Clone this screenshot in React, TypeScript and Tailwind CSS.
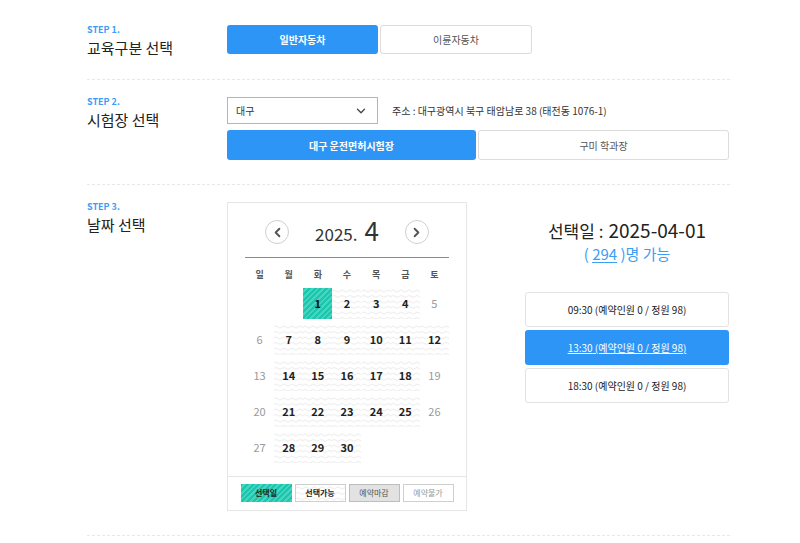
import React from "react";
import { ChevronDown, ChevronLeft, ChevronRight } from "lucide-react";

type Day = { d?: number; kind?: "sel" | "ok" | "off" };

const rows: Day[][] = [
	[{}, {}, { d: 1, kind: "sel" }, { d: 2, kind: "ok" }, { d: 3, kind: "ok" }, { d: 4, kind: "ok" }, { d: 5, kind: "off" }],
	[{ d: 6, kind: "off" }, { d: 7, kind: "ok" }, { d: 8, kind: "ok" }, { d: 9, kind: "ok" }, { d: 10, kind: "ok" }, { d: 11, kind: "ok" }, { d: 12, kind: "ok" }],
	[{ d: 13, kind: "off" }, { d: 14, kind: "ok" }, { d: 15, kind: "ok" }, { d: 16, kind: "ok" }, { d: 17, kind: "ok" }, { d: 18, kind: "ok" }, { d: 19, kind: "off" }],
	[{ d: 20, kind: "off" }, { d: 21, kind: "ok" }, { d: 22, kind: "ok" }, { d: 23, kind: "ok" }, { d: 24, kind: "ok" }, { d: 25, kind: "ok" }, { d: 26, kind: "off" }],
	[{ d: 27, kind: "off" }, { d: 28, kind: "ok" }, { d: 29, kind: "ok" }, { d: 30, kind: "ok" }, {}, {}, {}],
];

const weekdays = ["일", "월", "화", "수", "목", "금", "토"];

const stripes =
	"bg-[repeating-linear-gradient(135deg,#1cc6ad_0px,#1cc6ad_2px,#45d6c2_2px,#45d6c2_4px)]";

function Wave() {
	return (
		<svg className="absolute inset-0 w-full h-full" aria-hidden>
			<rect width="100%" height="100%" fill="url(#wave)" />
		</svg>
	);
}

function StepLabel({ step, title }: { step: string; title: string }) {
	return (
		<div className="w-[140px] h-[29px] shrink-0">
			<div className="text-[9px] font-bold text-[#3d9cf5] leading-[10px]">{step}</div>
			<div className="text-[15px] text-[#222] leading-[20px] mt-[3px]">{title}</div>
		</div>
	);
}

function Calendar() {
	return (
		<div className="w-[240px] border border-[#e6e6e6] bg-white">
			<div className="px-[17px] pt-[17px] pb-[13px]">
				<div className="flex items-center justify-center gap-[26px] h-[24px]">
					<button className="size-[24px] rounded-full border border-[#cfcfcf] flex items-center justify-center text-[#555]">
						<ChevronLeft size={15} strokeWidth={3} />
					</button>
					<div className="flex items-baseline gap-[7px] text-[#333]">
						<span className="text-[17px]">2025.</span>
						<span className="text-[26px] leading-[26px]">4</span>
					</div>
					<button className="size-[24px] rounded-full border border-[#cfcfcf] flex items-center justify-center text-[#555]">
						<ChevronRight size={15} strokeWidth={3} />
					</button>
				</div>
				<div className="mt-[13px] h-[1px] bg-[#8a8a8a]" />
				<div className="grid grid-cols-7 h-[30px] pt-[3px] items-center">
					{weekdays.map((w) => (
						<div key={w} className="text-center text-[9px] font-bold text-[#555]">
							{w}
						</div>
					))}
				</div>
				<div className="flex flex-col gap-[5px]">
					{rows.map((r, i) => (
						<div key={i} className="grid grid-cols-7 h-[31px]">
							{r.map((c, j) => {
								if (!c.d) return <div key={j} />;
								if (c.kind === "sel")
									return (
										<div key={j} className={`${stripes} flex items-center justify-center text-[11px] font-bold text-[#111]`}>
											{c.d}
										</div>
									);
								if (c.kind === "ok")
									return (
										<div key={j} className="relative flex items-center justify-center text-[11px] font-bold text-[#222]">
											<Wave />
											<span className="relative">{c.d}</span>
										</div>
									);
								return (
									<div key={j} className="flex items-center justify-center text-[11px] text-[#999]">
										{c.d}
									</div>
								);
							})}
						</div>
					))}
				</div>
			</div>
			<div className="border-t border-[#e6e6e6] pt-[7px] pb-[8px] flex justify-center gap-[3px]">
				<div className={`${stripes} w-[51px] h-[18px] flex items-center justify-center text-[8px] font-bold text-[#222]`}>
					선택일
				</div>
				<div className="relative w-[51px] h-[18px] border border-[#cfcfcf] flex items-center justify-center text-[8px] font-bold text-[#222]">
					<Wave />
					<span className="relative">선택가능</span>
				</div>
				<div className="w-[51px] h-[18px] border border-[#bdbdbd] bg-[#e2e2e2] flex items-center justify-center text-[8px] text-[#555]">
					예약마감
				</div>
				<div className="w-[51px] h-[18px] border border-[#cfcfcf] bg-white flex items-center justify-center text-[8px] text-[#999]">
					예약불가
				</div>
			</div>
		</div>
	);
}

const slots = ["09:30", "13:30", "18:30"];

export default function App() {
	return (
		<div
			className="w-[800px] h-[543px] bg-white overflow-hidden"
			style={{ fontFamily: '"Noto Sans CJK KR", "Noto Sans", sans-serif' }}
		>
			<svg width="0" height="0" className="absolute">
				<defs>
					<pattern id="wave" width="8" height="5.5" patternUnits="userSpaceOnUse">
						<path d="M0 3 Q2 1 4 3 T8 3" fill="none" stroke="#e6e6e6" strokeWidth="0.9" />
					</pattern>
				</defs>
			</svg>
			<div className="ml-[87px] w-[643px]">
				{/* step 1 */}
				<section className="flex pt-[25px] pb-[25px] border-b border-dashed border-[#e8e8e8]">
					<StepLabel step="STEP 1." title="교육구분 선택" />
					<div className="flex gap-[2px]">
						<button className="w-[151px] h-[29px] rounded-[3px] bg-[#2d95f5] text-white text-[10px] font-bold">
							일반자동차
						</button>
						<button className="w-[152px] h-[29px] rounded-[3px] border border-[#dcdcdc] bg-white text-[#555] text-[10px]">
							이륜자동차
						</button>
					</div>
				</section>

				{/* step 2 */}
				<section className="flex pt-[17px] pb-[24px] border-b border-dashed border-[#e8e8e8]">
					<StepLabel step="STEP 2." title="시험장 선택" />
					<div className="flex flex-col gap-[6px]">
						<div className="flex items-center gap-[14px]">
							<div className="w-[151px] h-[27px] border border-[#b5b5b5] flex items-center justify-between pl-[8px] pr-[9px] text-[10px] text-[#333]">
								<span>대구</span>
								<ChevronDown size={14} strokeWidth={2.2} className="text-[#444]" />
							</div>
							<span className="text-[10px] text-[#333]">주소 : 대구광역시 북구 태암남로 38 (태전동 1076-1)</span>
						</div>
						<div className="flex gap-[2px]">
							<button className="w-[249px] h-[30px] rounded-[3px] bg-[#2d95f5] text-white text-[10px] font-bold">
								대구 운전면허시험장
							</button>
							<button className="w-[251px] h-[30px] rounded-[3px] border border-[#dcdcdc] bg-white text-[#555] text-[10px]">
								구미 학과장
							</button>
						</div>
					</div>
				</section>

				{/* step 3 */}
				<section className="flex pt-[17px] pb-[24px] border-b border-dashed border-[#e8e8e8]">
					<StepLabel step="STEP 3." title="날짜 선택" />
					<Calendar />
					<div className="ml-[58px] w-[204px] pt-[16px] flex flex-col items-center">
						<div className="flex items-baseline text-[#222] leading-[24px]">
							<span className="text-[17px]">선택일 :</span>
							<span className="text-[19px] ml-[5px]">2025-04-01</span>
						</div>
						<div className="text-[15px] text-[#3d9cf5] leading-[22px]">
							( <span className="underline underline-offset-2">294</span> )명 가능
						</div>
						<div className="mt-[27px] w-full flex flex-col gap-[3px]">
							{slots.map((s, i) => (
								<div
									key={s}
									className={
										i === 1
											? "h-[35px] rounded-[3px] bg-[#2d95f5] text-white text-[10px] underline flex items-center justify-center"
											: "h-[35px] rounded-[3px] border border-[#e3e3e3] bg-white text-[#222] text-[10px] flex items-center justify-center"
									}
								>
									{s} (예약인원 0 / 정원 98)
								</div>
							))}
						</div>
					</div>
				</section>
			</div>
		</div>
	);
}
